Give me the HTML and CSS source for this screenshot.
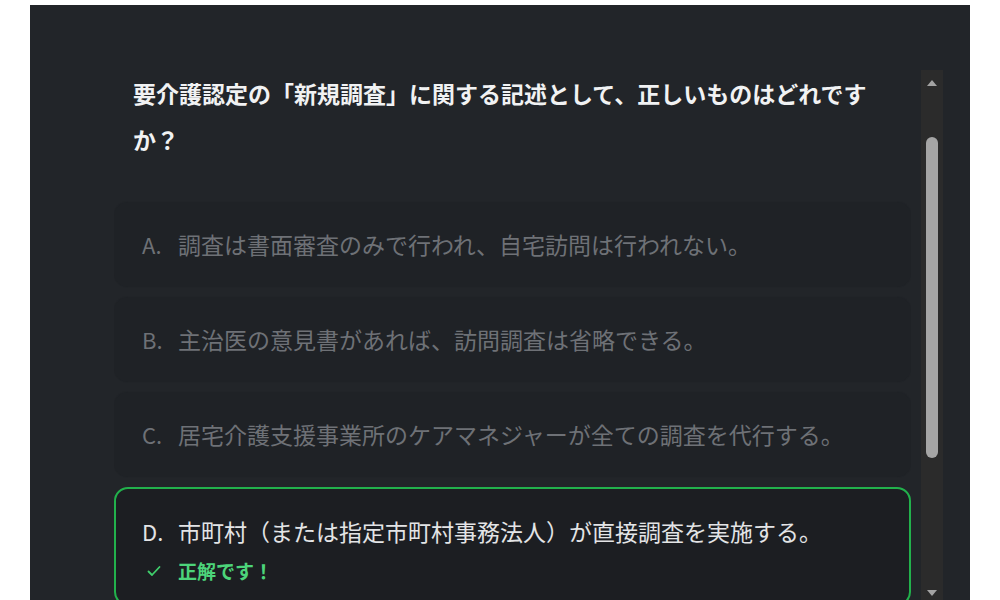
FILE: index.html
```html
<!DOCTYPE html>
<html lang="ja">
<head>
<meta charset="utf-8">
<link rel="stylesheet" href="styles.css">
</head>
<body>
<div class="panel">
  <div class="scroller">
    <div class="content">
      <h2 class="question">要介護認定の「新規調査」に関する記述として、正しいものはどれですか？</h2>
      <ul class="options">
        <li class="option"><span class="label">A.</span><span class="text">調査は書面審査のみで行われ、自宅訪問は行われない。</span></li>
        <li class="option"><span class="label">B.</span><span class="text">主治医の意見書があれば、訪問調査は省略できる。</span></li>
        <li class="option"><span class="label">C.</span><span class="text">居宅介護支援事業所のケアマネジャーが全ての調査を代行する。</span></li>
        <li class="option correct"><span class="label">D.</span><span class="text">市町村（または指定市町村事務法人）が直接調査を実施する。</span>
          <span class="check"><svg width="14" height="12" viewBox="0 0 14 12"><polyline points="1.5,6.5 5,10 12.5,2" fill="none" stroke="#3fcf6c" stroke-width="1.8" stroke-linecap="round" stroke-linejoin="round"/></svg></span><span class="feedback">正解です！</span>
        </li>
      </ul>
    </div>
    <div class="scrollbar">
      <div class="arrow up"></div>
      <div class="track"><div class="thumb"></div></div>
      <div class="arrow down"></div>
    </div>
  </div>
</div>
</body>
</html>
```
FILE: styles.css
```css
html, body {
  margin: 0;
  padding: 0;
  background: #ffffff;
  overflow: hidden;
  height: 600px;
}
body {
  padding: 5px 30px 0;
  font-family: "Noto Sans CJK JP", "Noto Sans", sans-serif;
}
.panel {
  width: 940px;
  height: 595px;
  background: #222529;
  box-sizing: border-box;
  padding: 65px 27px 0 84px;
  overflow: hidden;
}
.scroller {
  display: flex;
  gap: 10px;
  height: 530px;
}
.content {
  width: 797px;
  overflow: hidden;
}
.question {
  margin: 0;
  padding: 0 24px 0 19px;
  font-size: 23px;
  line-height: 46px;
  font-weight: 700;
  color: #f1f2f3;
}
.options {
  list-style: none;
  margin: 40px 0 0;
  padding: 0;
  display: flex;
  flex-direction: column;
  gap: 10px;
}
.option {
  display: grid;
  grid-template-columns: 36px 1fr;
  align-items: baseline;
  padding: 26px 28px;
  background: #1f2226;
  border-radius: 14px;
  box-shadow: 0 0 0 1px #212428;
  font-size: 23px;
  line-height: 33px;
  color: #6e7176;
}
.label {
  font-size: 22px;
}
.option.correct {
  background: #1c1e22;
  border: 2px solid #22b14c;
  padding: 26px 26px 20px;
  color: #e3e4e6;
  box-shadow: none;
}
.check {
  margin-top: 10px;
  align-self: center;
  display: flex;
  align-items: center;
  padding-left: 5px;
}
.feedback {
  margin-top: 10px;
  font-size: 19px;
  line-height: 26px;
  font-weight: 700;
  color: #4cd47a;
}
.scrollbar {
  width: 22px;
  flex: none;
  background: #2b2b2b;
  display: flex;
  flex-direction: column;
  align-items: center;
}
.arrow {
  height: 26px;
  display: flex;
  align-items: center;
  justify-content: center;
  flex: none;
}
.arrow.up::before {
  content: "";
  border-left: 5px solid transparent;
  border-right: 5px solid transparent;
  border-bottom: 6px solid #a3a3a3;
}
.arrow.down {
  height: 14px;
}
.arrow.down::before {
  content: "";
  border-left: 5px solid transparent;
  border-right: 5px solid transparent;
  border-top: 6px solid #a3a3a3;
}
.track {
  flex: 1;
  width: 100%;
  display: flex;
  justify-content: center;
}
.thumb {
  margin-top: 41px;
  width: 12px;
  height: 321px;
  border-radius: 6px;
  background: #a5a5a5;
}
```
